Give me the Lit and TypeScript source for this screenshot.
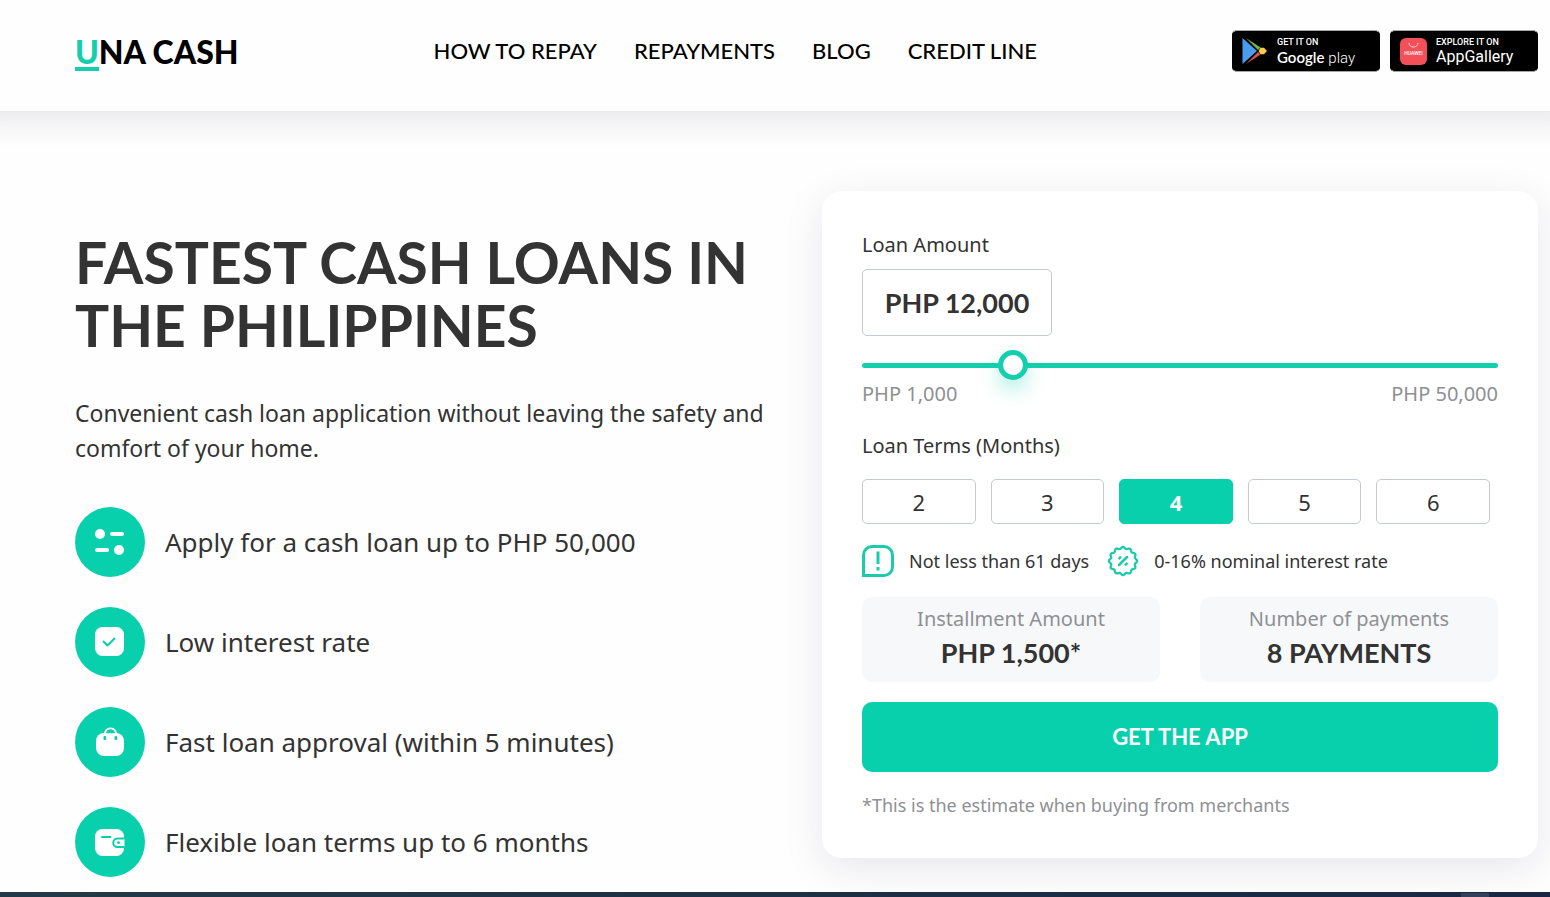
import { LitElement, html, css, svg } from "lit";
import { customElement, state } from "lit/decorators.js";

const TERMS = [2, 3, 4, 5, 6];
const NAV = ["HOW TO REPAY", "REPAYMENTS", "BLOG", "CREDIT LINE"];

const icons = {
  sliders: svg`<circle cx="5" cy="7" r="5" fill="#fff"/><rect x="15" y="5" width="14" height="4" rx="2" fill="#fff"/>
    <rect x="0" y="21" width="14" height="4" rx="2" fill="#fff"/><circle cx="24" cy="23" r="5" fill="#fff"/>`,
  check: svg`<rect x="0" y="0" width="29" height="29" rx="7.500" fill="#fff"/>
    <path d="M8.500 14.500l4 4 7-7" fill="none" stroke="#08cfac" stroke-width="2" stroke-linecap="round" stroke-linejoin="round"/>`,
  bag: svg`<path d="M10 8C10 3.500 12 1.500 15.500 1.500S21 3.500 21 8" fill="none" stroke="#fff" stroke-width="2.200"/>
    <rect x="1" y="6" width="28" height="23" rx="8" fill="#fff"/>
    <path d="M11.300 6.300a4.200 3.800 0 0 1 8.400 0z" fill="#08cfac"/>
    <rect x="8.500" y="9" width="2.600" height="4" rx="1" fill="#08cfac"/><rect x="19.500" y="9" width="2.600" height="4" rx="1" fill="#08cfac"/>`,
  wallet: svg`<rect x="0" y="2" width="29" height="27" rx="7.500" fill="#fff"/>
    <path d="M7 10h8.500" stroke="#08cfac" stroke-width="2" stroke-linecap="round"/>
    <path d="M29.500 11.500h-7a4 4 0 0 0 0 8.500h7" fill="#fff" stroke="#08cfac" stroke-width="2"/>
    <circle cx="23.500" cy="15.700" r="1.400" fill="#08cfac"/>`,
};

const FEATURES = [
  { icon: icons.sliders, text: "Apply for a cash loan up to PHP 50,000" },
  { icon: icons.check, text: "Low interest rate" },
  { icon: icons.bag, text: "Fast loan approval (within 5 minutes)" },
  { icon: icons.wallet, text: "Flexible loan terms up to 6 months" },
];

// Outline of the percent seal: twelve shallow lobes around a circle.
const sealPath = (() => {
  const pts: string[] = [];
  for (let i = 0; i < 120; i++) {
    const a = (i / 120) * Math.PI * 2;
    const r = 13.2 + 0.9 * Math.cos(a * 12);
    pts.push(`${(16 + r * Math.sin(a)).toFixed(2)} ${(16 - r * Math.cos(a)).toFixed(2)}`);
  }
  return `M${pts.join("L")}Z`;
})();

@customElement("app-root")
export class AppRoot extends LitElement {
  @state() private amount = 12000;
  @state() private term = 4;

  static styles = css`
    :host {
      display: flex;
      flex-direction: column;
      min-height: 100vh;
      background: #fefefe;
      color: #333;
      font-family: "Noto Sans", "Open Sans", sans-serif;
    }
    * { box-sizing: border-box; }
    h1, p, ul { margin: 0; padding: 0; }
    a { color: inherit; text-decoration: none; }
    button, input { font: inherit; color: inherit; margin: 0; }
    button { cursor: pointer; }

    .header {
      display: flex;
      align-items: flex-start;
      justify-content: space-between;
      padding: 30px 12px 39px 75px;
      background: #fefefe;
      box-shadow: 0 -20px 30px 30px rgba(32, 21, 72, 0.1);
    }
    .logo {
      display: flex;
      height: 42px;
      font: 900 32px/44px Lato, sans-serif;
      color: #000;
      white-space: pre;
    }
    .logo-u {
      height: 41px;
      color: #14cfad;
      border-bottom: 4px solid #14cfad;
    }
    .nav { display: flex; gap: 37px; color: #000; font: 500 22px/42px Lato, sans-serif; }
    .badges { display: flex; gap: 10px; }
    .badge {
      display: flex;
      align-items: center;
      width: 148px;
      height: 42px;
      padding-left: 9px;
      gap: 9px;
      border: 1px solid #000;
      border-top-color: #a6a6a6;
      border-bottom-color: #a6a6a6;
      border-radius: 5px;
      background: #000;
      color: #fff;
      font-family: Roboto, sans-serif;
    }
    .badge-text { display: flex; flex-direction: column; padding-top: 2px; }
    .badge-small { font-size: 9px; line-height: 10px; font-weight: 500; }
    .badge-name { font-size: 16px; line-height: 20px; }
    .google { font-family: Lato, sans-serif; font-weight: 600; font-size: 15px; }
    .play { font-weight: 300; font-size: 15px; }

    .main {
      flex: 1;
      display: grid;
      grid-template-columns: minmax(0, 1fr) minmax(0, 1fr);
      gap: 31px;
      align-items: start;
      padding: 80px 12px 15px 75px;
    }
    .intro { padding-top: 40px; }
    .title { font: 700 57px/63px Lato, sans-serif; }
    .lead { margin-top: 39px; font-size: 23px; line-height: 35px; }
    .features { display: flex; flex-direction: column; gap: 30px; margin-top: 41px; list-style: none; }
    .feature { display: flex; align-items: center; gap: 20px; font-size: 26px; line-height: 36px; }
    .feature-icon {
      display: grid;
      place-items: center;
      flex: none;
      width: 70px;
      height: 70px;
      border-radius: 50%;
      background: #08cfac;
    }

    .card {
      padding: 40px;
      border-radius: 20px;
      background: #fff;
      box-shadow: 0 10px 40px rgba(32, 21, 72, 0.1);
    }
    .label { display: block; font-size: 20px; line-height: 28px; }
    .amount {
      display: block;
      width: 190px;
      height: 67px;
      margin-top: 10px;
      padding: 0;
      border: 1px solid #c4cad0;
      border-radius: 5px;
      background: #fff;
      text-align: center;
      font: 700 27px/36px Lato, sans-serif;
    }
    .range {
      display: block;
      appearance: none;
      width: 100%;
      height: 30px;
      margin-top: 14px;
      background: transparent;
    }
    .range::-webkit-slider-runnable-track { height: 5px; border-radius: 3px; background: #14cfad; }
    .range::-webkit-slider-thumb {
      appearance: none;
      width: 30px;
      height: 30px;
      margin-top: -13px;
      border: 5px solid #14cfad;
      border-radius: 50%;
      background: #fff;
      box-shadow: 0 10px 20px rgba(8, 207, 172, 0.3);
    }
    .limits { display: flex; justify-content: space-between; color: #8e9093; font-size: 20px; line-height: 28px; }
    .terms-label { margin-top: 24px; }
    .terms {
      display: grid;
      grid-template-columns: repeat(5, minmax(0, 1fr));
      gap: 15px;
      margin: 19px 8px 0 0;
    }
    .term {
      height: 45px;
      padding: 0;
      border: 1px solid #c4cad0;
      border-radius: 5px;
      background: #fff;
      font-size: 22px;
    }
    .term-on { border-color: #08cfac; background: #08cfac; color: #fff; font-weight: 700; }
    .notes { display: flex; align-items: center; gap: 18px; margin-top: 21px; font-size: 18px; line-height: 32px; }
    .note { display: flex; align-items: center; gap: 15px; }
    .totals { display: grid; grid-template-columns: 1fr 1fr; gap: 40px; margin-top: 20px; }
    .total {
      height: 85px;
      padding-top: 8px;
      border-radius: 10px;
      background: #f7f8fa;
      text-align: center;
    }
    .total-label { color: #8e9093; font-size: 20px; line-height: 28px; }
    .total-value { font: 700 27px/40px Lato, sans-serif; }
    .cta {
      width: 100%;
      height: 70px;
      margin-top: 20px;
      border: 0;
      border-radius: 10px;
      background: #08cfac;
      color: #fff;
      font: 700 22px/30px Lato, sans-serif;
    }
    .hint { margin-top: 20px; color: #8e9093; font-size: 18px; line-height: 26px; }
    .footer {
      display: flex;
      justify-content: flex-end;
      position: relative;
      height: 5px;
      padding: 1px 61px 0 0;
      background: linear-gradient(90deg, #223a46, #1a2744);
    }
    .footer-tab { width: 28px; background: #33415a; }
  `;

  private get amountText() {
    return `PHP ${this.amount.toLocaleString("en-US")}`;
  }

  render() {
    return html`
      <header class="header">
        <a class="logo" href="#" aria-label="UNA CASH"><span class="logo-u">U</span>NA CASH</a>
        <nav class="nav">${NAV.map((n) => html`<a href="#">${n}</a>`)}</nav>
        <div class="badges">
          <a class="badge" href="#">
            <svg width="26" height="28" viewBox="0 0 26 28" aria-hidden="true">
              <path d="M4 1l14.500 9.500L16 13z" fill="#6cb952"/>
              <path d="M4 27l14.500-9.500L16 15z" fill="#e2504e"/>
              <path d="M.5 1v26L15 14z" fill="#4a9cf0"/>
              <path d="M18.500 10.800h3.500l3 3.200-3 3.200h-3.500L16.500 14z" fill="#fbcb43"/>
            </svg>
            <span class="badge-text">
              <span class="badge-small">GET IT ON</span>
              <span class="badge-name"><span class="google">Google</span> <span class="play">play</span></span>
            </span>
          </a>
          <a class="badge" href="#">
            <svg width="27" height="27" viewBox="0 0 27 27" aria-hidden="true">
              <rect width="27" height="27" rx="6" fill="#f4505a"/>
              <path d="M9 5a4.500 4 0 0 0 9 0" fill="none" stroke="#ffd5d7"/>
              <text x="13.500" y="17" text-anchor="middle" font-size="5" font-weight="500" fill="#fff">HUAWEI</text>
            </svg>
            <span class="badge-text">
              <span class="badge-small">EXPLORE IT ON</span>
              <span class="badge-name">AppGallery</span>
            </span>
          </a>
        </div>
      </header>

      <main class="main">
        <section class="intro">
          <h1 class="title">FASTEST CASH LOANS IN THE PHILIPPINES</h1>
          <p class="lead">Convenient cash loan application without leaving the safety and comfort of your home.</p>
          <ul class="features">
            ${FEATURES.map(
              (f) => html`<li class="feature">
                <span class="feature-icon"><svg width="30" height="30" viewBox="0 0 30 30" aria-hidden="true">${f.icon}</svg></span>
                <span>${f.text}</span>
              </li>`
            )}
          </ul>
        </section>

        <section class="card">
          <label class="label" for="amount">Loan Amount</label>
          <input class="amount" id="amount" type="text" readonly .value=${this.amountText} />
          <input
            class="range"
            type="range"
            aria-label="Loan Amount"
            min="1000"
            max="50000"
            step="1000"
            .value=${String(this.amount)}
            @input=${(e: Event) => (this.amount = Number((e.target as HTMLInputElement).value))}
          />
          <div class="limits"><span>PHP 1,000</span><span>PHP 50,000</span></div>
          <div class="label terms-label" id="terms">Loan Terms (Months)</div>
          <div class="terms" role="group" aria-labelledby="terms">
            ${TERMS.map(
              (t) => html`<button
                type="button"
                class="term ${t === this.term ? "term-on" : ""}"
                aria-pressed=${t === this.term ? "true" : "false"}
                @click=${() => (this.term = t)}
              >${t}</button>`
            )}
          </div>
          <div class="notes">
            <span class="note">
              <svg width="32" height="32" viewBox="0 0 32 32" fill="none" stroke="#1bcbab" aria-hidden="true">
                <path d="M1.500 30.500V10a8.500 8.500 0 0 1 8.500-8.500h12a8.500 8.500 0 0 1 8.500 8.500v12a8.500 8.500 0 0 1-8.500 8.500z" stroke-width="3"/>
                <path d="M16 6.500v12.500M16 22v3.500" stroke-width="3"/>
              </svg>
              Not less than 61 days
            </span>
            <span class="note">
              <svg width="32" height="32" viewBox="0 0 32 32" fill="none" stroke="#1bcbab" aria-hidden="true">
                <path d=${sealPath} stroke-width="2.300"/>
                <path d="M12 20l8-8M12.300 13.300l1-1M18.700 19.700l1-1" stroke-width="2.500" stroke-linecap="round"/>
              </svg>
              0-16% nominal interest rate
            </span>
          </div>
          <div class="totals">
            <div class="total">
              <div class="total-label">Installment Amount</div>
              <div class="total-value">PHP 1,500*</div>
            </div>
            <div class="total">
              <div class="total-label">Number of payments</div>
              <div class="total-value">8 PAYMENTS</div>
            </div>
          </div>
          <button class="cta" type="button">GET THE APP</button>
          <p class="hint">*This is the estimate when buying from merchants</p>
        </section>
      </main>

      <footer class="footer"><span class="footer-tab"></span></footer>
    `;
  }
}
